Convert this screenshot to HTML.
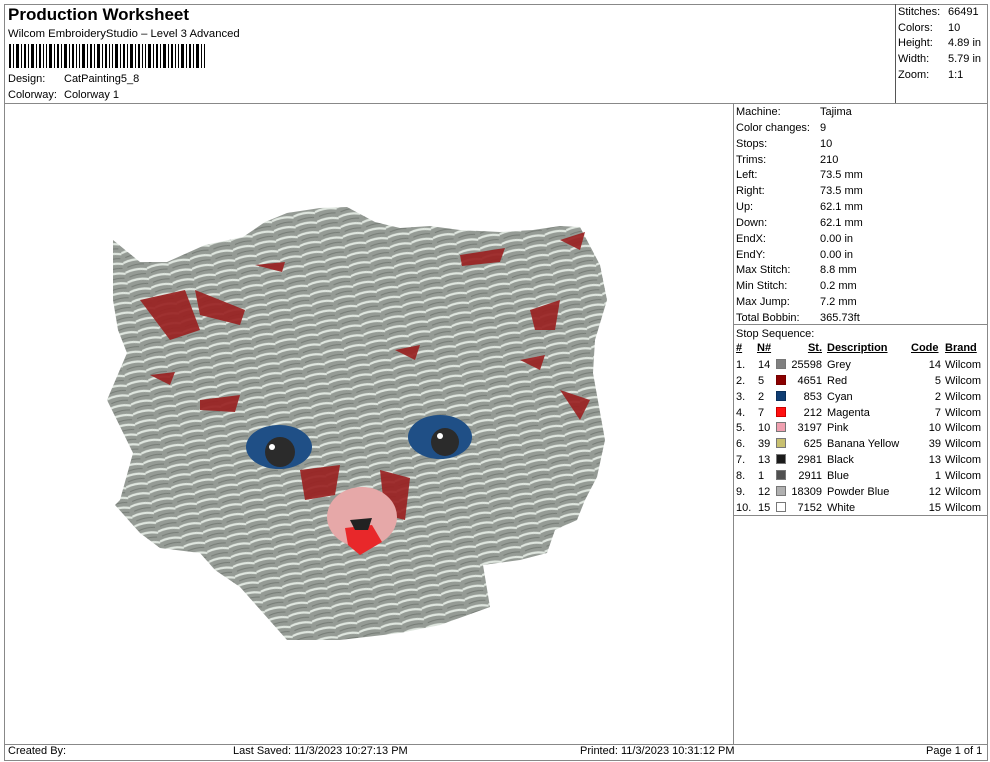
<!DOCTYPE html>
<html><head><meta charset="utf-8"><style>
*{margin:0;padding:0;box-sizing:border-box}
body{width:990px;height:762px;background:#fff;font-family:"Liberation Sans",Arial,sans-serif;font-size:11px;color:#000;position:relative;overflow:hidden}
.a{position:absolute;white-space:nowrap}
.ln{position:absolute;background:#888}
.r{text-align:right}
u{text-decoration:underline}
.sw{display:inline-block;width:10px;height:10px;border:1px solid #777;vertical-align:-1px}
.ft{font-size:11px}
</style></head><body>
<div class="ln" style="left:4px;top:4px;width:984px;height:1px"></div>
<div class="ln" style="left:4px;top:4px;width:1px;height:757px"></div>
<div class="ln" style="left:987px;top:4px;width:1px;height:757px"></div>
<div class="ln" style="left:895px;top:4px;width:1px;height:99px;background:#555"></div>
<div class="ln" style="left:4px;top:103px;width:984px;height:1px"></div>
<div class="ln" style="left:733px;top:103px;width:1px;height:641px"></div>
<div class="ln" style="left:733px;top:324px;width:255px;height:1px"></div>
<div class="ln" style="left:733px;top:515px;width:255px;height:1px"></div>
<div class="ln" style="left:4px;top:744px;width:984px;height:1px"></div>
<div class="ln" style="left:4px;top:760px;width:984px;height:1px"></div>

<div class="a" style="left:8px;top:5px;font-size:17px;font-weight:bold">Production Worksheet</div>
<div class="a" style="left:8px;top:28px;font-size:11.3px">Wilcom EmbroideryStudio – Level 3 Advanced</div>
<svg class="a" style="left:9px;top:44px" width="196" height="24">
<g fill="#000">
<rect x="0" width="2" height="24"/><rect x="4" width="1" height="24"/><rect x="7" width="3" height="24"/><rect x="12" width="1" height="24"/><rect x="15" width="2" height="24"/><rect x="19" width="1" height="24"/><rect x="22" width="3" height="24"/><rect x="27" width="1" height="24"/><rect x="30" width="2" height="24"/><rect x="34" width="1" height="24"/><rect x="37" width="1" height="24"/><rect x="40" width="3" height="24"/><rect x="45" width="1" height="24"/><rect x="48" width="2" height="24"/><rect x="52" width="1" height="24"/><rect x="55" width="3" height="24"/><rect x="60" width="1" height="24"/><rect x="63" width="2" height="24"/><rect x="67" width="1" height="24"/><rect x="70" width="1" height="24"/><rect x="73" width="3" height="24"/><rect x="78" width="1" height="24"/><rect x="81" width="2" height="24"/><rect x="85" width="1" height="24"/><rect x="88" width="3" height="24"/><rect x="93" width="1" height="24"/><rect x="96" width="2" height="24"/><rect x="100" width="1" height="24"/><rect x="103" width="1" height="24"/><rect x="106" width="3" height="24"/><rect x="111" width="1" height="24"/><rect x="114" width="2" height="24"/><rect x="118" width="1" height="24"/><rect x="121" width="3" height="24"/><rect x="126" width="1" height="24"/><rect x="129" width="2" height="24"/><rect x="133" width="1" height="24"/><rect x="136" width="1" height="24"/><rect x="139" width="3" height="24"/><rect x="144" width="1" height="24"/><rect x="147" width="2" height="24"/><rect x="151" width="1" height="24"/><rect x="154" width="3" height="24"/><rect x="159" width="1" height="24"/><rect x="162" width="2" height="24"/><rect x="166" width="1" height="24"/><rect x="169" width="1" height="24"/><rect x="172" width="3" height="24"/><rect x="177" width="1" height="24"/><rect x="180" width="2" height="24"/><rect x="184" width="1" height="24"/><rect x="187" width="3" height="24"/><rect x="192" width="1" height="24"/><rect x="195" width="1" height="24"/>
</g></svg>
<div class="a" style="left:8px;top:73px">Design:</div><div class="a" style="left:64px;top:73px">CatPainting5_8</div>
<div class="a" style="left:8px;top:89px">Colorway:</div><div class="a" style="left:64px;top:89px">Colorway 1</div>

<div class="a" style="left:898px;top:5px;line-height:15.7px">Stitches:<br>Colors:<br>Height:<br>Width:<br>Zoom:</div>
<div class="a" style="left:948px;top:5px;line-height:15.7px">66491<br>10<br>4.89 in<br>5.79 in<br>1:1</div>

<div class="a" style="left:736px;top:105px;line-height:15.85px">Machine:<br>Color changes:<br>Stops:<br>Trims:<br>Left:<br>Right:<br>Up:<br>Down:<br>EndX:<br>EndY:<br>Max Stitch:<br>Min Stitch:<br>Max Jump:<br>Total Bobbin:<br>Stop Sequence:</div>
<div class="a" style="left:820px;top:105px;line-height:15.85px">Tajima<br>9<br>10<br>210<br>73.5 mm<br>73.5 mm<br>62.1 mm<br>62.1 mm<br>0.00 in<br>0.00 in<br>8.8 mm<br>0.2 mm<br>7.2 mm<br>365.73ft</div>

<div class="a" style="left:736px;top:342px;font-weight:bold"><u>#</u></div>
<div class="a" style="left:757px;top:342px;font-weight:bold"><u>N#</u></div>
<div class="a r" style="left:780px;width:42px;top:342px;font-weight:bold"><u>St.</u></div>
<div class="a" style="left:827px;top:342px;font-weight:bold"><u>Description</u></div>
<div class="a" style="left:911px;top:342px;font-weight:bold"><u>Code</u></div>
<div class="a" style="left:945px;top:342px;font-weight:bold"><u>Brand</u></div>

<div class="a" style="left:736px;top:358px;line-height:15.85px">1.<br>2.<br>3.<br>4.<br>5.<br>6.<br>7.<br>8.<br>9.<br>10.</div>
<div class="a" style="left:758px;top:358px;line-height:15.85px">14<br>5<br>2<br>7<br>10<br>39<br>13<br>1<br>12<br>15</div>
<div class="a" style="left:776px;top:358px;line-height:15.85px">
<span class="sw" style="background:#808080"></span><br><span class="sw" style="background:#8b0000;border-color:#700"></span><br><span class="sw" style="background:#0f3d73;border-color:#0a2f5a"></span><br><span class="sw" style="background:#ff1010;border-color:#c00"></span><br><span class="sw" style="background:#f0a0b0"></span><br><span class="sw" style="background:#c8c070"></span><br><span class="sw" style="background:#1a1a1a"></span><br><span class="sw" style="background:#505050"></span><br><span class="sw" style="background:#b0b0b0"></span><br><span class="sw" style="background:#fff"></span></div>
<div class="a r" style="left:780px;width:42px;top:358px;line-height:15.85px">25598<br>4651<br>853<br>212<br>3197<br>625<br>2981<br>2911<br>18309<br>7152</div>
<div class="a" style="left:827px;top:358px;line-height:15.85px">Grey<br>Red<br>Cyan<br>Magenta<br>Pink<br>Banana Yellow<br>Black<br>Blue<br>Powder Blue<br>White</div>
<div class="a r" style="left:905px;width:36px;top:358px;line-height:15.85px">14<br>5<br>2<br>7<br>10<br>39<br>13<br>1<br>12<br>15</div>
<div class="a" style="left:945px;top:358px;line-height:15.85px">Wilcom<br>Wilcom<br>Wilcom<br>Wilcom<br>Wilcom<br>Wilcom<br>Wilcom<br>Wilcom<br>Wilcom<br>Wilcom</div>

<svg class="a" style="left:0;top:0" width="733" height="744">
<defs><pattern id="fur" width="22" height="10" patternUnits="userSpaceOnUse" patternTransform="rotate(-12)">
<rect width="22" height="10" fill="#959b95"/><path d="M0 3 Q11 0 22 4" stroke="#dfe6df" stroke-width="2.2" fill="none"/><path d="M3 8 Q12 6 20 8" stroke="#767c76" stroke-width="1" fill="none"/></pattern></defs>
<path fill="url(#fur)" d="M113 240 L140 262 L167 262 L205 245 L243 237 L265 222 L287 213 L320 208 L347 207 L375 222 L400 228 L430 226 L460 230 L500 232 L533 230 L560 226 L580 227 L600 265 L607 300 L595 340 L593 373 L605 440 L597 477 L585 500 L577 520 L555 530 L547 553 L520 560 L483 565 L490 607 L440 625 L400 633 L340 640 L287 640 L240 587 L215 570 L200 553 L160 548 L140 533 L115 505 L120 500 L133 453 L107 400 L127 353 L118 330 L113 300 Z"/>
<g fill="#9a2222" opacity=".92">
<path d="M140 300 L185 290 L200 330 L170 340 Z"/><path d="M195 290 L245 310 L240 325 L200 315 Z"/><path d="M200 400 L240 395 L235 412 L200 410 Z"/><path d="M460 255 L505 248 L500 262 L462 266 Z"/><path d="M530 310 L560 300 L555 330 L535 330 Z"/><path d="M560 240 L585 232 L580 250 Z"/><path d="M395 350 L420 345 L415 360 Z"/><path d="M300 470 L340 465 L335 495 L305 500 Z"/><path d="M380 470 L410 478 L405 520 L385 515 Z"/><path d="M560 390 L590 400 L580 420 Z"/><path d="M150 375 L175 372 L170 385 Z"/><path d="M255 265 L285 262 L282 272 Z"/><path d="M520 360 L545 355 L540 370 Z"/></g>
<ellipse cx="362" cy="517" rx="35" ry="30" fill="#e6a8a8"/>
<path d="M345 528 L372 525 L382 542 L360 555 L348 545 Z" fill="#e8282a"/>
<path d="M350 520 L372 518 L368 530 L355 530 Z" fill="#222"/>
<ellipse cx="279" cy="447" rx="33" ry="22" fill="#1f4f86"/><circle cx="280" cy="452" r="15" fill="#2b2b2b"/><circle cx="272" cy="447" r="3" fill="#fff"/>
<ellipse cx="440" cy="437" rx="32" ry="22" fill="#1f4f86"/><circle cx="445" cy="442" r="14" fill="#2b2b2b"/><circle cx="440" cy="436" r="3" fill="#fff"/>
</svg>

<div class="a ft" style="left:8px;top:745px">Created By:</div>
<div class="a ft" style="left:233px;top:745px">Last Saved: 11/3/2023 10:27:13 PM</div>
<div class="a ft" style="left:580px;top:745px">Printed: 11/3/2023 10:31:12 PM</div>
<div class="a ft" style="left:926px;top:745px">Page 1 of 1</div>
</body></html>
